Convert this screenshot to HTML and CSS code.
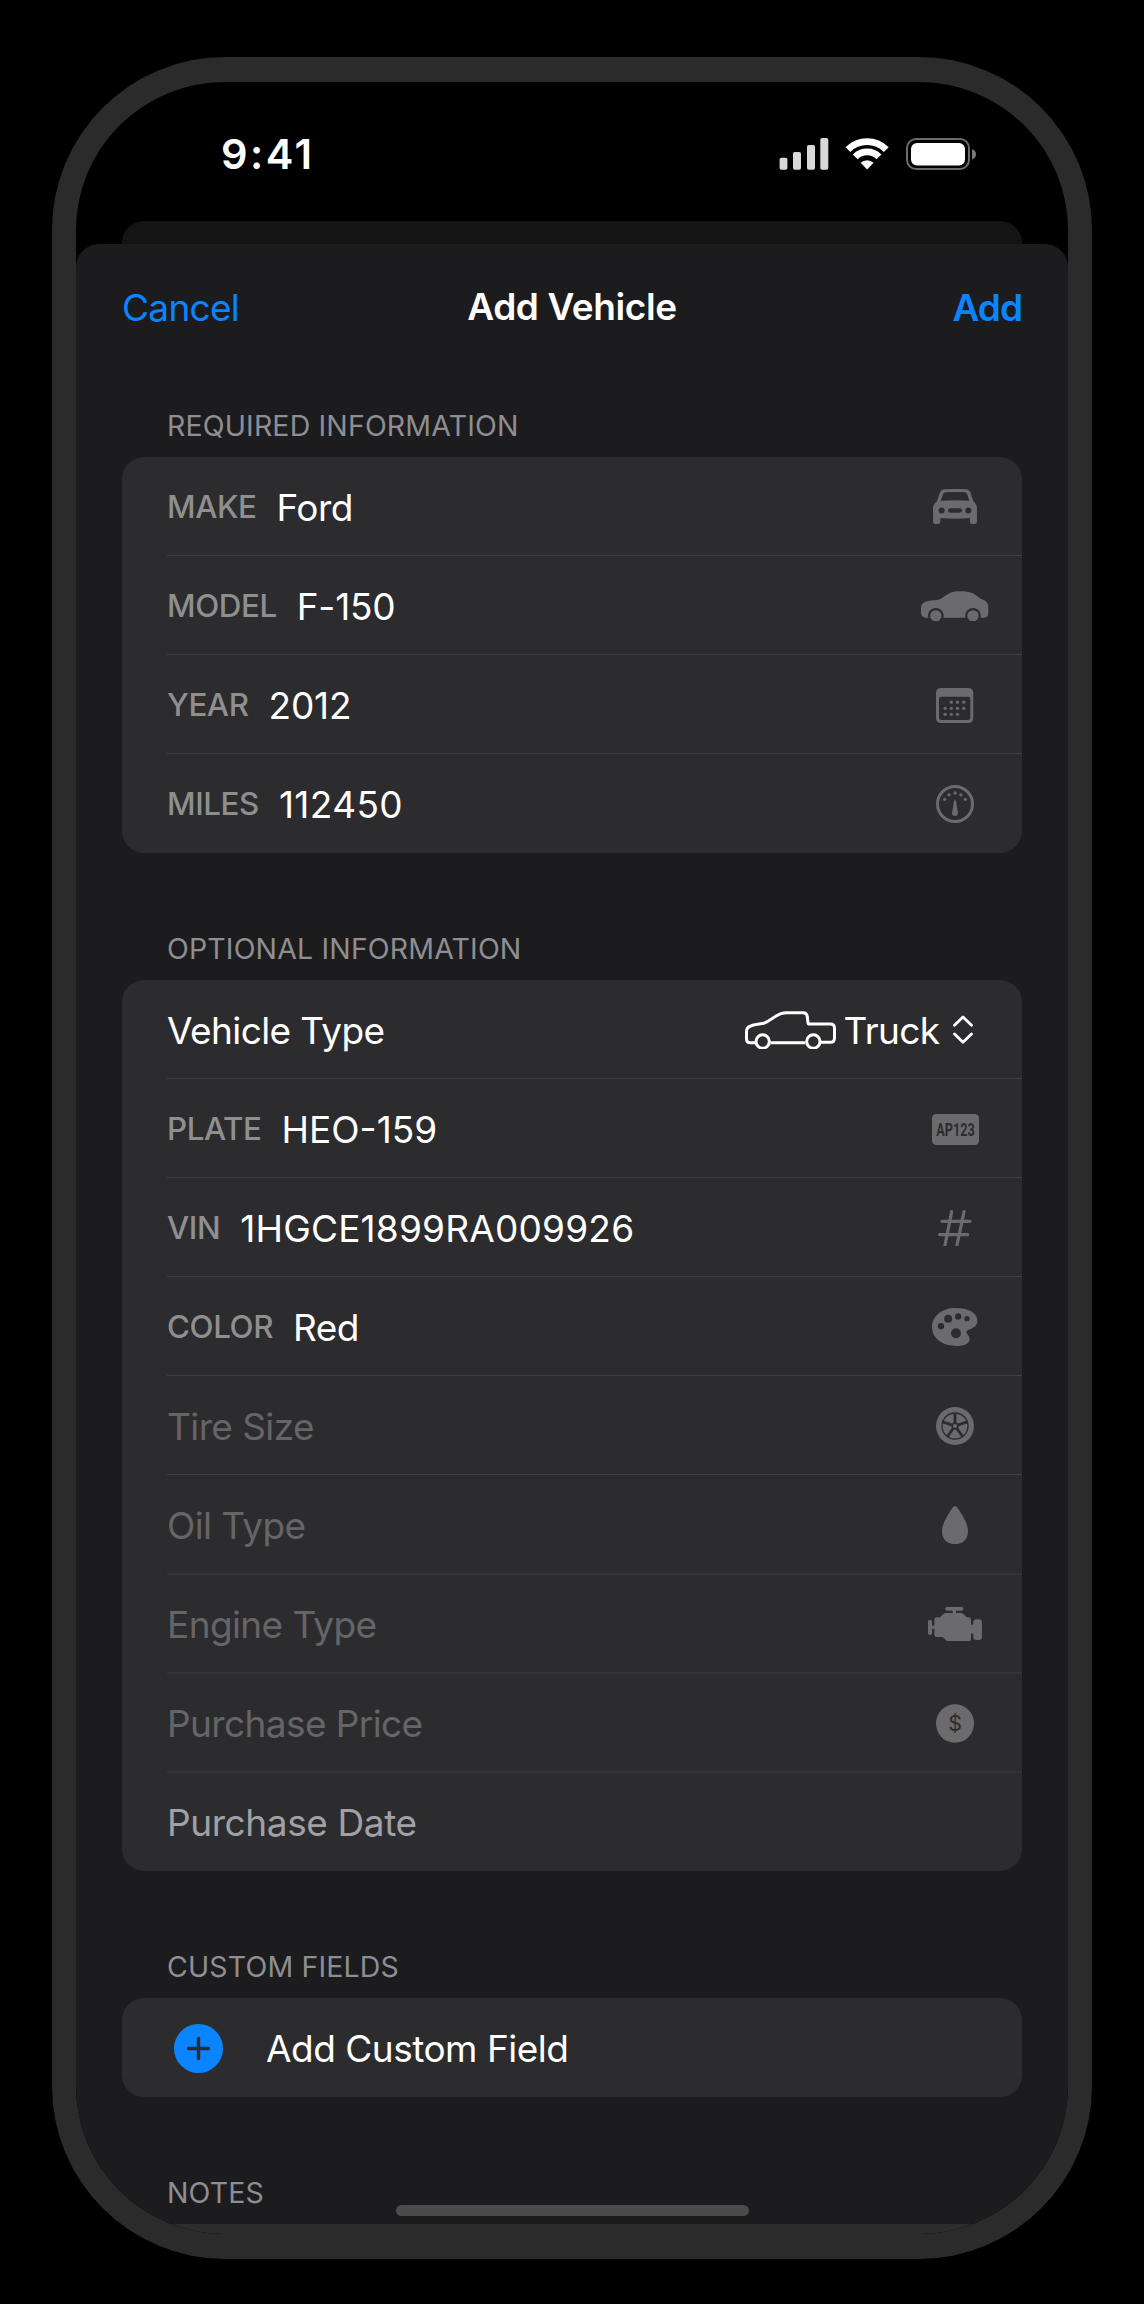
FILE: index.html
```html
<!DOCTYPE html>
<html lang="en">
<head>
<meta charset="utf-8">
<title>Add Vehicle</title>
<link rel="stylesheet" href="styles.css">
</head>
<body>
<div class="phone">
  <div class="status">
    <span class="time">9:41</span>
    <svg class="status-icons" width="198" height="34" viewBox="779 137 198 34">
      <g fill="#d9d9d9">
        <rect x="779.6" y="157.7" width="7.8" height="12" rx="1.8"/>
        <rect x="793" y="152" width="8" height="17.7" rx="1.8"/>
        <rect x="807" y="145" width="8" height="24.7" rx="1.8"/>
        <rect x="820.3" y="138" width="8" height="31.7" rx="1.8"/>
      </g>
      <g fill="none" stroke="#fff" stroke-width="6.8">
        <path d="M847.9 149.6A27.2 27.2 0 0 1 886.3 149.6"/>
        <path d="M855.2 156.9A16.8 16.8 0 0 1 879 156.9"/>
      </g>
      <path fill="#fff" d="M867.1 169.5L860.6 162.8A9.4 9.4 0 0 1 873.6 162.8Z"/>
      <rect x="907" y="139" width="62" height="30" rx="9" fill="none" stroke="#6b6b6b" stroke-width="2"/>
      <rect x="911" y="143" width="54" height="22.4" rx="6" fill="#fff"/>
      <path fill="#777" d="M972 149Q976 150.500 976 154.200T972 159.400Z"/>
    </svg>
  </div>
  <div class="back-sheet"></div>
  <main class="sheet">
    <header class="nav">
      <span class="nav-cancel">Cancel</span>
      <h1 class="nav-title">Add Vehicle</h1>
      <span class="nav-add">Add</span>
    </header>

    <h2 class="section-title">REQUIRED INFORMATION</h2>
    <section class="card">
      <div class="row"><span class="label">MAKE</span><span class="value">Ford</span>
        <span class="slot"><svg width="44" height="35.300" viewBox="0 0 132 106"><path fill-rule="evenodd" d="M0 58Q0 46 12 37L20 12Q24 1 36 .6Q66 -.6 98 .6Q109 1 113 12L121 37Q132 46 132 58V98Q132 105 125 105H117Q111 105 111 98V87Q66 91 22 87V98Q22 105 15 105H7Q0 105 0 98ZM31 14L23 35Q66 32 109 35L102 14Q100 10 95 9.500Q66 8.500 38 9.500Q33 10 31 14Z"/><g class="cut"><circle cx="26" cy="64.500" r="9"/><circle cx="106" cy="64.500" r="9"/><rect x="45" y="58" width="42" height="13" rx="6.500"/></g></svg></span></div>
      <div class="row"><span class="label">MODEL</span><span class="value mixed">F-150</span>
        <span class="slot"><svg width="67.300" height="30.700" viewBox="0 0 202 92"><path d="M12 80Q0 79 0 64V50Q0 38 12 33Q22 28 50 27Q56 26 62 22L76 12Q92 1 108 .5H128Q144 1 156 7Q166 13 176 21Q180 24 190 28Q202 34 202 48V66Q202 80 190 80Z"/><g class="cut"><circle cx="44.500" cy="74.500" r="23.500"/><circle cx="156" cy="74.500" r="23.500"/></g><circle cx="44.500" cy="74.500" r="17"/><circle cx="156" cy="74.500" r="17"/></svg></span></div>
      <div class="row"><span class="label">YEAR</span><span class="value mixed">2012</span>
        <span class="slot"><svg width="37.300" height="35" viewBox="0 0 112 105"><path fill-rule="evenodd" d="M16 0H96Q112 0 112 16V89Q112 105 96 105H16Q0 105 0 89V16Q0 0 16 0ZM16 26Q9 26 9 33V89Q9 96 16 96H96Q103 96 103 89V33Q103 26 96 26Z"/><circle cx="46" cy="42.500" r="5"/><circle cx="64.500" cy="42.500" r="5"/><circle cx="83.500" cy="42.500" r="5"/><circle cx="27.500" cy="61" r="5"/><circle cx="46" cy="61" r="5"/><circle cx="64.500" cy="61" r="5"/><circle cx="83.500" cy="61" r="5"/><circle cx="27.500" cy="79" r="5"/><circle cx="46" cy="79" r="5"/><circle cx="64.500" cy="79" r="5"/></svg></span></div>
      <div class="row"><span class="label">MILES</span><span class="value miles">112450</span>
        <span class="slot"><svg width="38" height="38" viewBox="0 0 114 114"><circle cx="57" cy="57" r="52.500" fill="none" stroke="#6b6b6d" stroke-width="9"/><circle cx="26" cy="43" r="5"/><circle cx="39" cy="29.500" r="5"/><circle cx="57" cy="24" r="5"/><circle cx="74.500" cy="29.500" r="5"/><circle cx="88" cy="43" r="5"/><path d="M54 48Q57 42 60 48L66 84Q66 93 57 93Q48 93 48 84Z"/></svg></span></div>
    </section>

    <h2 class="section-title">OPTIONAL INFORMATION</h2>
    <section class="card">
      <div class="row"><span class="value">Vehicle Type</span>
        <span class="picker"><svg width="91" height="38.700" viewBox="0 0 273 116" fill="none" stroke="#fff" stroke-width="9"><path d="M31 95H16Q4.500 95 4.500 83V62Q4.500 49 17 45Q26 41 56 37Q62 35 70 30L92 16Q108 5 124 5H174Q186 5 187 18L189 35Q189 39 193 39H256Q268.500 39 268.500 52V80Q268.500 94 256 94H228M181 95H76"/><circle cx="53" cy="91.500" r="20"/><circle cx="205" cy="91.500" r="20"/></svg><span class="value picker-text">Truck</span><svg width="20" height="29.300" viewBox="0 0 60 88" fill="none" stroke="#fff" stroke-width="8.500" stroke-linecap="round" stroke-linejoin="round"><path d="M4.500 31L30 6L55.500 31M4.500 57L30 82L55.500 57"/></svg></span></div>
      <div class="row"><span class="label">PLATE</span><span class="value plate-value">HEO-159</span>
        <span class="slot"><svg width="47" height="31" viewBox="0 0 141 93"><rect width="141" height="93" rx="13"/><text class="plate" x="13" y="65" textLength="115" lengthAdjust="spacingAndGlyphs">AP123</text></svg></span></div>
      <div class="row"><span class="label">VIN</span><span class="value vin">1HGCE1899RA009926</span>
        <span class="slot"><svg width="33.700" height="36.700" viewBox="0 0 101 110" fill="none" stroke="#6b6b6d" stroke-width="9.500" stroke-linecap="round"><path d="M41 5L21 105M78 5L57 105M12 34H96M5 74H89"/></svg></span></div>
      <div class="row"><span class="label">COLOR</span><span class="value">Red</span>
        <span class="slot"><svg width="45.300" height="38" viewBox="0 0 136 114"><path d="M70 0C110 0 136 14 136 38C136 52 128 58 114 64C104 68 101 71 104 76C108 82 113 86 113 93C113 107 97 114 73 114C30 114 0 90 0 58C0 24 30 0 70 0Z"/><g class="cut"><circle cx="27" cy="54.500" r="9.500"/><circle cx="48.500" cy="32" r="12"/><circle cx="78.500" cy="25.500" r="9.500"/><circle cx="105" cy="32" r="8"/><circle cx="72" cy="76" r="15"/></g></svg></span></div>
      <div class="row"><span class="placeholder">Tire Size</span>
        <span class="slot"><svg width="38" height="38" viewBox="0 0 114 114"><circle cx="57" cy="57" r="57"/><circle class="cut" cx="57" cy="57" r="41"/><circle cx="57" cy="57" r="37"/><path stroke="#2c2c2e" stroke-width="8.500" d="M57 57V18M57 57L94.100 44.900M57 57L79.900 88.600M57 57L34.100 88.600M57 57L19.900 44.900"/><circle class="cut" cx="57" cy="57" r="11"/><circle cx="57" cy="57" r="6"/></svg></span></div>
      <div class="row faint"><span class="placeholder">Oil Type</span>
        <span class="slot"><svg width="26" height="38.300" viewBox="0 0 78 115"><path d="M39 1C43 1 45 3 47 6C62 30 78 52 78 76C78 100 62 115 39 115C16 115 0 100 0 76C0 52 16 30 31 6C33 3 35 1 39 1Z"/></svg></span></div>
      <div class="row faint"><span class="placeholder">Engine Type</span>
        <span class="slot"><svg width="54" height="34.300" viewBox="0 0 162 103"><rect x="52" width="54" height="11" rx="5"/><rect x="74" y="9" width="10" height="11"/><path d="M19 38Q19 31 26 31H36L46 21Q49 18 54 18H98Q103 18 106 21L116 31H122Q129 31 129 38V96Q129 103 122 103H62Q57 103 54 100L44 90H26Q19 90 19 83Z"/><rect y="38" width="12" height="46" rx="6"/><rect x="10" y="56" width="12" height="9"/><rect x="136" y="37" width="26" height="62" rx="10"/><rect x="128" y="53" width="10" height="27"/></svg></span></div>
      <div class="row faint"><span class="placeholder">Purchase Price</span>
        <span class="slot"><svg width="38" height="39" viewBox="0 0 114 117"><ellipse cx="57" cy="58.500" rx="57" ry="58"/><text class="dollar" x="57" y="81.500" text-anchor="middle">$</text></svg></span></div>
      <div class="row"><span class="date">Purchase Date</span></div>
    </section>

    <h2 class="section-title">CUSTOM FIELDS</h2>
    <section class="card">
      <div class="row"><svg class="plus" width="49" height="49" viewBox="0 0 49 49"><circle cx="24.500" cy="24.500" r="24.500"/><path d="M24.500 14.500V34.500M14.500 24.500H34.500"/></svg><span class="value action">Add Custom Field</span></div>
    </section>

    <h2 class="section-title">NOTES</h2>
    <section class="card"><div class="row"></div></section>
  </main>
  <div class="home-indicator"></div>
</div>
</body>
</html>
```
FILE: styles.css
```css
* { box-sizing: border-box; }
body {
  margin: 0;
  height: 2304px;
  overflow: hidden;
  background: #000;
  color: #fff;
  font-family: Inter, "Liberation Sans", sans-serif;
  font-size: 37px;
}
.phone {
  position: relative;
  width: 1040px;
  height: 2202px;
  margin: 57px auto 0;
  border: solid #2b2b2b;
  border-width: 25px 24px;
  border-radius: 173px;
  overflow: hidden;
  background: #000;
}
.status {
  display: flex;
  justify-content: space-between;
  align-items: center;
  height: 139px;
  padding: 5px 91px 0 145px;
}
.time { font-size: 41.5px; font-weight: 600; letter-spacing: 2.5px; }
.status-icons { display: block; }
.back-sheet {
  height: 23px;
  margin: 0 46px;
  border-radius: 22px 22px 0 0;
  background: #141414;
}
.sheet {
  height: 2010px;
  padding: 0 46px;
  border-radius: 23px 23px 0 0;
  background: #1c1c1e;
}
.nav {
  display: grid;
  grid-template-columns: 1fr auto 1fr;
  align-items: center;
  height: 86px;
  padding-top: 40px;
}
.nav-cancel, .nav-add { color: #0a84ff; }
.nav-cancel { letter-spacing: -.7px; }
.nav-add { justify-self: end; font-weight: 600; letter-spacing: -1px; }
.nav-title {
  margin: 0;
  padding-bottom: 2px;
  font-size: 37px;
  font-weight: 600;
  letter-spacing: -.4px;
}
.section-title {
  display: flex;
  align-items: flex-end;
  height: 127px;
  margin: 0;
  padding: 0 0 14px 45px;
  color: #8e8e93;
  font-size: 28.5px;
  font-weight: 400;
  line-height: 35px;
  letter-spacing: .15px;
}
.card { border-radius: 22px; background: #2c2c2e; }
.row {
  display: flex;
  align-items: center;
  height: 99px;
  margin-left: 45px;
  padding-top: 2px;
  border-bottom: 1px solid #404042;
}
.row.faint { border-color: #343436; box-shadow: 0 1px 0 #343436; }
.row:last-child { border-color: transparent; }
.label {
  margin-right: 20px;
  color: #8f8f90;
  font-size: 31.3px;
  font-weight: 500;
  letter-spacing: -.4px;
}
.value, .placeholder, .date { letter-spacing: -.6px; }
.value.mixed { letter-spacing: -.2px; }
.value.plate-value { letter-spacing: 0; }
.value.miles { letter-spacing: .4px; }
.value.vin { letter-spacing: .2px; }
.value.action { letter-spacing: -.5px; }
.placeholder { color: #656567; }
.date { color: #a0a0a5; letter-spacing: -.4px; }
.slot {
  display: flex;
  justify-content: center;
  width: 90px;
  margin: 0 22px 0 auto;
  fill: #6b6b6d;
}
.cut, .plate, .dollar { fill: #2c2c2e; }
.plate { font: 700 53px Roboto, sans-serif; }
.dollar { font: 400 64px Inter, sans-serif; }
.picker { display: flex; align-items: center; margin: 0 49px 0 auto; }
.picker-text { margin: 0 13.5px 0 7px; }
.plus {
  margin: 0 43px 0 7px;
  fill: #0a84ff;
  stroke: #2c2c2e;
  stroke-width: 3.4px;
  stroke-linecap: round;
}
.plus circle { stroke: none; }
.home-indicator {
  position: absolute;
  left: 320px;
  bottom: 18px;
  width: 353px;
  height: 11px;
  border-radius: 6px;
  background: #4b4b4b;
}
```
